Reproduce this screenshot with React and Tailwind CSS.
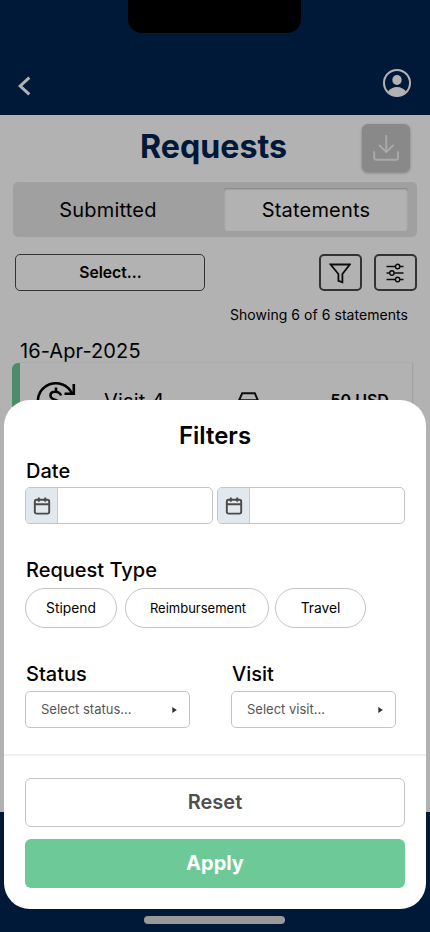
import { useState } from "react";

const requestTypes = [
  { name: "Stipend", style: "w-[92px] text-[13.8px]" },
  { name: "Reimbursement", style: "w-[144px] mr-[-2px] text-[13px] pt-[1px] pl-[2px]" },
  { name: "Travel", style: "w-[91px] text-[13.8px]" },
];

const CalendarIcon = () => (
  <svg width="18" height="18" viewBox="0 0 18 18" fill="none" stroke="#4a4a4a" strokeWidth="1.9">
    <rect x="1.8" y="2.8" width="14.4" height="13.8" rx="1.8" />
    <path d="M1.8 7.3H16.2M5.8 0.4V4.8M12.2 0.4V4.8" />
  </svg>
);

const Header = () => (
  <header className="h-[115px] bg-[#002552] flex flex-col items-center">
    <div className="w-[173px] h-[33px] mr-[1px] bg-black rounded-b-[14px]" />
    <div className="w-full flex justify-between pl-[18px] pr-[19px] pt-[36px]">
      <button className="mt-[7px] h-[20px]">
        <svg width="13" height="20" viewBox="0 0 13 20" fill="none" stroke="white" strokeWidth="3">
          <path d="M11.3 1.6L2.2 10L11.3 18.4" />
        </svg>
      </button>
      <button className="h-[28px]">
        <svg width="28" height="28" viewBox="0 0 28 28">
          <circle cx="14" cy="14" r="13" fill="none" stroke="white" strokeWidth="2" />
          <ellipse cx="14" cy="11" rx="4.7" ry="5" fill="white" />
          <path d="M5 22.5C7.2 19.6 10.3 18 14 18S20.8 19.6 23 22.5C20.8 25.3 17.6 27 14 27S7.2 25.3 5 22.5Z" fill="white" />
        </svg>
      </button>
    </div>
  </header>
);

const TitleRow = () => (
  <div className="grid grid-cols-[1fr_auto_1fr] items-center h-[48px] mt-[9px] pl-[17px] pr-[20px]">
    <span />
    <h1 className="text-[32.2px] leading-[40px] font-bold text-[#002552] -mt-[2px]">Requests</h1>
    <button className="justify-self-end size-[48px] rounded-[6px] bg-[#c4c4c4] shadow-[0_1px_3px_rgba(0,0,0,0.3)] flex items-center justify-center">
      <svg className="mr-[1px]" width="26" height="26" viewBox="0 0 26 26" fill="none" stroke="#f3f3f3" strokeWidth="1.9" strokeLinecap="round" strokeLinejoin="round">
        <path d="M13.3 0.9V17.2M6.5 10.4L13.3 17.2L20.1 10.4M1.2 17V22.5Q1.2 24.8 3.5 24.8H22.9Q25 24.8 25 22.5V17" />
      </svg>
    </button>
  </div>
);

const Tabs = () => {
  const [tab, setTab] = useState("Statements");

  return (
    <div className="mx-[13px] mt-[10px] h-[55px] rounded-[5px] bg-[#e6e6e6] py-[6px] pl-[4px] pr-[9px] flex gap-[25px]">
      {["Submitted", "Statements"].map((name) => (
        <button
          key={name}
          onClick={() => setTab(name)}
          className={
            tab === name
              ? "w-[184px] h-[43px] rounded-[3px] bg-white text-[20px] tracking-[0.2px] shadow-[inset_0_1px_2px_rgba(0,0,0,0.3)]"
              : "w-[182px] h-[43px] text-[20px] tracking-[0.2px]"
          }
        >
          {name}
        </button>
      ))}
    </div>
  );
};

const Toolbar = () => (
  <div className="mt-[17px] ml-[15px] mr-[13px] flex h-[37px]">
    <button className="w-[190px] rounded-[5px] border border-[#4a4a4a] pl-[1px] text-[15.7px] font-semibold">
      Select...
    </button>
    <button className="ml-auto w-[43px] rounded-[5px] border-2 border-[#4a4a4a] flex items-center justify-center">
      <svg className="mt-[2px] mr-[1px]" width="22" height="21" viewBox="0 0 22 21" fill="none" stroke="#111" strokeWidth="1.8">
        <path d="M1.6 1.5H20.8L13.4 11V19.3L9.4 17.8V11L1.6 1.5Z" />
      </svg>
    </button>
    <button className="ml-[12px] w-[43px] rounded-[5px] border-2 border-[#4a4a4a] flex items-center justify-center">
      <svg className="mr-[1px]" width="18" height="20" viewBox="0 0 18 20" fill="none" stroke="#111" strokeWidth="1.4">
        <path d="M0.5 3.5H9.2M14 3.5H17.5M0.5 10H3.7M8.2 10H17.5M0.5 16.5H9.2M14 16.5H17.5" />
        <circle cx="11.6" cy="3.5" r="2.2" />
        <circle cx="5.9" cy="10" r="2.2" />
        <circle cx="11.6" cy="16.5" r="2.2" />
      </svg>
    </button>
  </div>
);

const StatementCard = () => (
  <div className="ml-[12px] mr-[18px] h-[76px] rounded-l-[6px] border-l-8 border-[#6dc997] shadow-[1px_0_2px_rgba(0,0,0,0.12)] flex items-center">
    <svg className="ml-[16px]" width="40" height="40" viewBox="0 0 40 40" fill="none" stroke="black" strokeWidth="2.6">
      <path d="M2.2 24A18 18 0 0 1 35.8 12M37.8 3V12.7H28.5M37 25A18 18 0 0 1 5 29" />
      <path d="M25 14.5C23.5 9.5 14.5 9.5 14.5 14.5C14.5 20.5 25.5 18 25.5 24C25.5 28.5 16 28.5 14 24M20 6.5V11M20 27V32" />
    </svg>
    <span className="ml-[28px] text-[20px] tracking-[0.2px]">Visit 4</span>
    <svg className="ml-[72px]" width="24" height="18" viewBox="0 0 24 18" fill="none" stroke="#111" strokeWidth="2">
      <path d="M2.2 8.2L5.2 1.2H17.8L20.8 8.2V17H2.2V8.2H20.8" />
    </svg>
    <span className="ml-[70px] mb-[2px] text-[16px] font-semibold">50 USD</span>
  </div>
);

const DateInput = () => (
  <label className="w-[188px] h-[37px] rounded-[5px] border border-[#c4c4c4] flex overflow-hidden">
    <span className="w-[32px] bg-[#e1e8ee] border-r border-[#c4cdd4] flex items-center justify-center">
      <CalendarIcon />
    </span>
    <input className="flex-1 min-w-0 outline-none" />
  </label>
);

const SelectField = ({ label, placeholder }) => (
  <div className="w-[165px]">
    <h3 className="pl-[1px] text-[20px] leading-[24px] font-medium">{label}</h3>
    <button className="mt-[5px] w-full h-[37px] rounded-[5px] border border-[#c4c4c4] pl-[15px] pr-[12px] flex items-center justify-between text-[13px] text-[#555]">
      {placeholder}
      <svg width="5" height="6" viewBox="0 0 5 6" fill="#333">
        <path d="M0.3 0L4.8 3L0.3 6Z" />
      </svg>
    </button>
  </div>
);

const FilterSheet = () => {
  const [selected, setSelected] = useState([]);

  const toggleType = (name) => {
    setSelected(
      selected.includes(name) ? selected.filter((item) => item !== name) : [...selected, name]
    );
  };

  return (
    <div className="absolute left-[4px] top-[400px] w-[422px] h-[509px] rounded-[26px] bg-white">
      <div className="px-[21px] pt-[21px] h-[354px]">
        <h2 className="text-center text-[24px] leading-[30px] font-semibold">Filters</h2>

        <h3 className="mt-[8px] pl-[1px] text-[20px] leading-[24px] font-medium">Date</h3>
        <div className="mt-[4px] flex justify-between">
          <DateInput />
          <DateInput />
        </div>

        <h3 className="mt-[34px] pl-[1px] text-[20px] leading-[24px] font-medium">Request Type</h3>
        <div className="mt-[6px] flex gap-[8px]">
          {requestTypes.map((type) => (
            <button
              key={type.name}
              onClick={() => toggleType(type.name)}
              className={`h-[40px] rounded-full border border-[#c4c4c4] ${type.style} ${
                selected.includes(type.name) ? "bg-[#e1e8ee]" : "bg-white"
              }`}
            >
              {type.name}
            </button>
          ))}
        </div>

        <div className="mt-[34px] flex gap-[41px]">
          <SelectField label="Status" placeholder="Select status..." />
          <SelectField label="Visit" placeholder="Select visit..." />
        </div>
      </div>

      <div className="border-t-2 border-[#f0f0f0] px-[21px] pt-[22px] flex flex-col gap-[12px]">
        <button
          onClick={() => setSelected([])}
          className="h-[49px] rounded-[6px] border border-[#c4c4c4] pb-[2px] text-[20px] font-semibold text-[#4f4f4f]"
        >
          Reset
        </button>
        <button className="h-[49px] rounded-[6px] bg-[#6dc997] pb-[2px] text-[20px] font-bold text-white">
          Apply
        </button>
      </div>
    </div>
  );
};

const App = () => {
  return (
    <div className="relative w-[430px] h-[932px] overflow-hidden bg-white text-black font-['Inter',sans-serif]">
      <Header />
      <main className="h-[697px] overflow-hidden">
        <TitleRow />
        <Tabs />
        <Toolbar />
        <p className="mt-[14px] mr-[22px] text-right text-[14px] leading-[20px] tracking-[0.05px]">
          Showing 6 of 6 statements
        </p>
        <p className="mt-[14px] mb-[-1px] ml-[20px] text-[20px] leading-[25px] tracking-[0.1px]">16-Apr-2025</p>
        <StatementCard />
      </main>
      <footer className="h-[120px] bg-[#002552]" />

      {/* dimmed backdrop with the sheet on top */}
      <div className="absolute inset-0 bg-black/30" />
      <FilterSheet />
      <div className="absolute left-[144px] top-[916px] w-[141px] h-[8px] rounded-full bg-[#999]" />
    </div>
  );
};

export default App;
